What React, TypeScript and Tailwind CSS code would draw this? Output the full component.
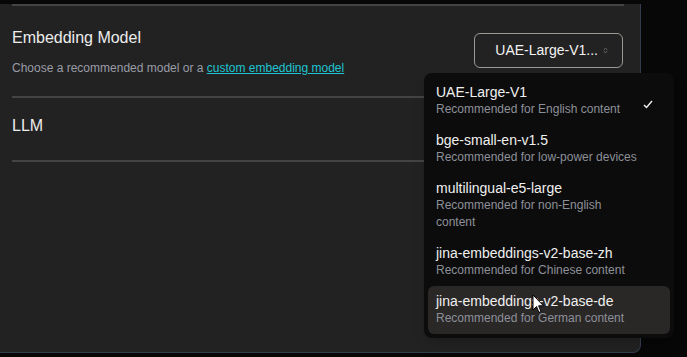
import { ChevronsUpDown } from 'lucide-react';

const models = [
  { name: 'UAE-Large-V1', desc: 'Recommended for English content', selected: true },
  { name: 'bge-small-en-v1.5', desc: 'Recommended for low-power devices' },
  { name: 'multilingual-e5-large', desc: 'Recommended for non-English content' },
  { name: 'jina-embeddings-v2-base-zh', desc: 'Recommended for Chinese content' },
  { name: 'jina-embeddings-v2-base-de', desc: 'Recommended for German content', active: true },
];

export default function App() {
  return (
    <div className="relative h-[357px] w-[687px] overflow-hidden bg-[#070707] font-['Liberation_Sans',Arial,sans-serif]">
      <div className="h-[349px] w-[641px] rounded-br-lg border-r border-b border-[#353c4e] bg-[#222222] pl-3 pr-4">
        <div className="mt-1 h-[2px] bg-[#444444]" />

        {/* embedding model */}
        <div className="flex items-start justify-between pt-[22px] pb-[20px]">
          <div>
            <h2 className="text-[16px] leading-[20px] text-[#ededed]">Embedding Model</h2>
            <p className="mt-3 text-[12px] leading-[16px] text-[#9a9ca6]">
              Choose a recommended model or a{' '}
              <a className="text-[#1fc4d2] underline">custom embedding model</a>
            </p>
          </div>
          <button className="mt-[5px] mr-px flex h-[35px] w-[149px] items-center justify-end gap-1 rounded-md border border-[#9c9893] pr-[13px] text-[14px] text-[#f2f2f2]">
            <span>UAE-Large-V1...</span>
            <ChevronsUpDown className="h-[7px] w-[7px] text-[#777]" strokeWidth={3} />
          </button>
        </div>

        <div className="h-[2px] bg-[#444444]" />

        {/* llm */}
        <div className="pt-[18px] pb-[24px]">
          <h2 className="text-[16px] leading-[20px] text-[#ededed]">LLM</h2>
        </div>

        <div className="h-[2px] bg-[#444444]" />
      </div>

      {/* dropdown */}
      <div className="absolute top-[73px] left-[424px] w-[250px] rounded-lg bg-[#0c0c0c] p-1 shadow-lg">
        {models.map((m) => (
          <div
            key={m.name}
            className={`flex items-start justify-between rounded-md px-2 py-[7px] ${m.active ? 'bg-[#2a2727]' : ''}`}
          >
            <div className="max-w-[205px]">
              <div className="text-[14px] leading-[17px] text-[#f0f0f0]">{m.name}</div>
              <div className="text-[12px] leading-[17px] text-[#8d9099]">{m.desc}</div>
            </div>
            {m.selected && (
              <svg width="10" height="9" viewBox="0 0 10 9" className="mt-[16px] mr-[9px]">
                <path d="M1 5 L3.5 7.5 L9 1" fill="none" stroke="#f2f2f2" strokeWidth="1.4" />
              </svg>
            )}
          </div>
        ))}
      </div>

      {/* mouse cursor */}
      <svg width="13" height="20" viewBox="0 0 13 20" className="absolute top-[294px] left-[532px]">
        <path
          d="M1 1 L1 16 L4.5 12.5 L7 18.5 L9 17.5 L6.6 11.8 L11.5 11.8 Z"
          fill="#ffffff"
          stroke="#000000"
          strokeWidth="1"
          strokeLinejoin="round"
        />
      </svg>
    </div>
  );
}
